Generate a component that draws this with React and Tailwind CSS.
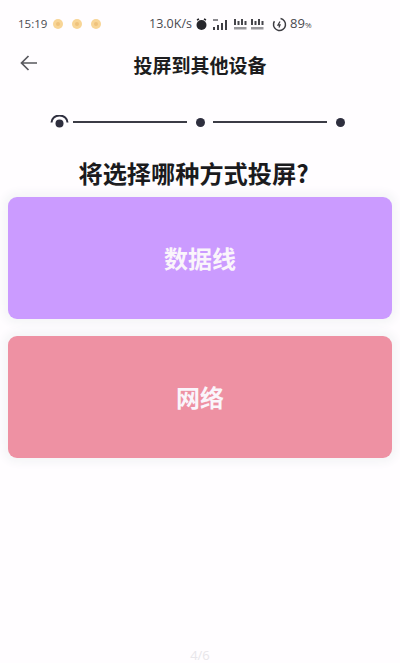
const cjk = { fontFamily: '"Noto Sans CJK SC", "Noto Sans", sans-serif' };
const latin = { fontFamily: '"Open Sans", sans-serif' };

function Coin() {
  return (
    <span className="w-[10px] h-[10px] rounded-full bg-[#f8d596] flex items-center justify-center">
      <span className="w-[4px] h-[4px] rounded-full bg-[#efc27c]" />
    </span>
  );
}

function Signal() {
  return (
    <svg width="15" height="13" viewBox="0 0 15 13">
      <g fill="#45454a">
        <rect x="1" y="1" width="2" height="6" />
        <rect x="4.5" y="3" width="2" height="4" />
        <rect x="8" y="1" width="2" height="6" />
        <rect x="11.5" y="3" width="2" height="4" />
        <rect x="1" y="9" width="12.5" height="2.5" opacity="0.55" />
      </g>
    </svg>
  );
}

function Dot() {
  return <span className="block w-[9px] h-[9px] rounded-full bg-[#2e2e3e] shrink-0" />;
}

function Line() {
  return <span className="block w-[114px] h-[2px] bg-[#3b3b45] shrink-0" />;
}

function Card({ color, text }) {
  return (
    <div className={`h-[122px] mx-[8px] mb-[17px] rounded-[9px] flex items-center justify-center shadow-[0_0_9px_5px_#f5f5f7] ${color}`}>
      <span className="text-[24px] font-bold text-[#faf5fb] leading-none">{text}</span>
    </div>
  );
}

export default function App() {
  return (
    <div className="relative w-[400px] h-[663px] bg-[#fffdff] overflow-hidden flex flex-col" style={cjk}>
      <div className="h-[48px] pl-[18px] flex items-center text-[#4a4a4f] shrink-0">
        <span className="text-[11.5px] font-medium w-[35px]" style={latin}>15:19</span>
        <div className="flex gap-[9px]">
          <Coin />
          <Coin />
          <Coin />
        </div>
        <span className="ml-[48px] w-[45px] text-[12.5px] font-medium" style={latin}>13.0K/s</span>
        <svg width="13" height="13" viewBox="0 0 13 13" className="ml-[1px]">
          <circle cx="6.5" cy="7" r="5" fill="#26262b" />
          <path d="M2 2 L4 1 M11 2 L9 1" stroke="#26262b" strokeWidth="1.5" />
        </svg>
        <svg width="16" height="13" viewBox="0 0 16 13" className="ml-[4px]">
          <g fill="#3e3e44">
            <rect x="1" y="1" width="5" height="2" opacity="0.6" />
            <rect x="1" y="9" width="2" height="3" />
            <rect x="5" y="7" width="2" height="5" />
            <rect x="9" y="5" width="2" height="7" />
            <rect x="13" y="2" width="2" height="10" />
          </g>
        </svg>
        <div className="ml-[5px] flex"><Signal /></div>
        <div className="ml-[2px] flex"><Signal /></div>
        <svg width="15" height="15" viewBox="0 0 15 15" className="ml-[7px]">
          <circle cx="7.5" cy="7.5" r="6" fill="none" stroke="#3b3b40" strokeWidth="1.5" strokeDasharray="30 8" transform="rotate(-80 7.5 7.5)" />
          <path d="M8 4.5 L6 8 H8 L7 10.5" fill="none" stroke="#3b3b40" strokeWidth="1.3" />
        </svg>
        <span className="ml-[3px] text-[13px] font-medium" style={latin}>89</span>
        <span className="text-[8px] mt-[2px]" style={latin}>%</span>
      </div>

      <div className="h-[32px] flex items-center relative shrink-0">
        <svg width="18" height="18" viewBox="0 0 18 18" className="absolute left-[20px] top-[6px]" fill="none" stroke="#58585e" strokeWidth="1.7">
          <path d="M17 9 H1.5 M8.5 2 L1.5 9 L8.5 16" />
        </svg>
        <h1 className="w-full text-center text-[19px] font-bold text-[#1d1d20] leading-none">投屏到其他设备</h1>
      </div>

      <div className="h-[28px] mt-[28px] flex items-center pl-[50px] shrink-0">
        <svg width="19" height="15" viewBox="0 0 19 15" className="shrink-0">
          <path d="M1.5 7.5 A8 7 0 0 1 17.5 7.5" fill="none" stroke="#2e2e3e" strokeWidth="2" />
          <circle cx="9.5" cy="8.5" r="4" fill="#2e2e3e" />
        </svg>
        <div className="ml-[4px]"><Line /></div>
        <div className="ml-[8.5px]"><Dot /></div>
        <div className="ml-[8.5px]"><Line /></div>
        <div className="ml-[9px]"><Dot /></div>
      </div>

      <h2 className="mt-[24px] pr-[13px] text-center text-[24.2px] font-bold text-[#1a1a1d] leading-[25px] shrink-0">将选择哪种方式投屏?</h2>

      <div className="mt-[12px] shrink-0">
        <Card color="bg-[#cb9bff]" text="数据线" />
        <Card color="bg-[#ee91a3]" text="网络" />
      </div>

      <span className="absolute bottom-0 left-0 w-full text-center text-[13px] text-[#e8e6ea] leading-[16px]" style={latin}>4/6</span>
    </div>
  );
}
